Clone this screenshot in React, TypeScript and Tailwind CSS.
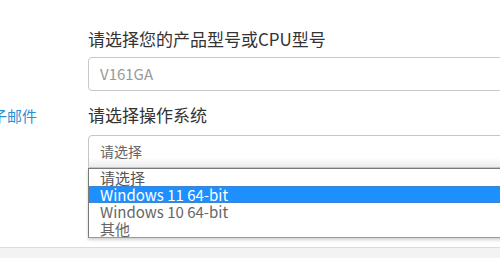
import React from "react";

const cjk = { fontFamily: '"Noto Sans CJK SC", "Noto Sans", sans-serif' };

export default function App() {
  return (
    <div className="w-[500px] h-[258px] overflow-hidden bg-white flex flex-col" style={cjk}>
      <div className="h-[247px] flex shrink-0">
        <div className="w-[88px] shrink-0 pt-[104px]">
          <div className="w-[37px] overflow-hidden flex justify-end whitespace-nowrap text-[15px] leading-[24px] text-[#2b8ed3]">
            电子邮件
          </div>
        </div>
        <div className="w-[440px] shrink-0 pt-[27px]">
          <div className="text-[17px] leading-[24px] text-[#333]">请选择您的产品型号或CPU型号</div>
          <div className="mt-[6px] h-[34px] border border-[#c9c9c9] rounded-[4px] flex items-center pl-[11px] text-[15px] text-[#999]">
            V161GA
          </div>
          <div className="mt-[12px] text-[17px] leading-[24px] text-[#333]">请选择操作系统</div>
          <div className="relative mt-[8px]">
            <div className="h-[33px] border border-[#c6c6c6] rounded-t-[4px] flex items-center pl-[11px] text-[14px] text-[#666] bg-gradient-to-b from-white from-70% to-[#ececec]">
              请选择
            </div>
            <div className="absolute left-0 top-[33px] w-full border border-[#7a7a7a] border-b-[#9a9a9a] bg-white shadow-[0_2px_3px_rgba(0,0,0,0.18)] text-[15px] leading-[17px]">
              <div className="h-[17px] pl-[11px] text-[#555]">请选择</div>
              <div className="h-[17px] pl-[11px] text-white bg-[#1e8fff] border-y border-[#3a86d4] leading-[15px]">Windows 11 64-bit</div>
              <div className="h-[17px] pl-[11px] text-[#666]">Windows 10 64-bit</div>
              <div className="h-[17px] pl-[11px] text-[#666]">其他</div>
            </div>
          </div>
        </div>
      </div>
      <div className="flex-1 border-t border-[#dcdcdc] bg-[#f3f3f3]" />
    </div>
  );
}
